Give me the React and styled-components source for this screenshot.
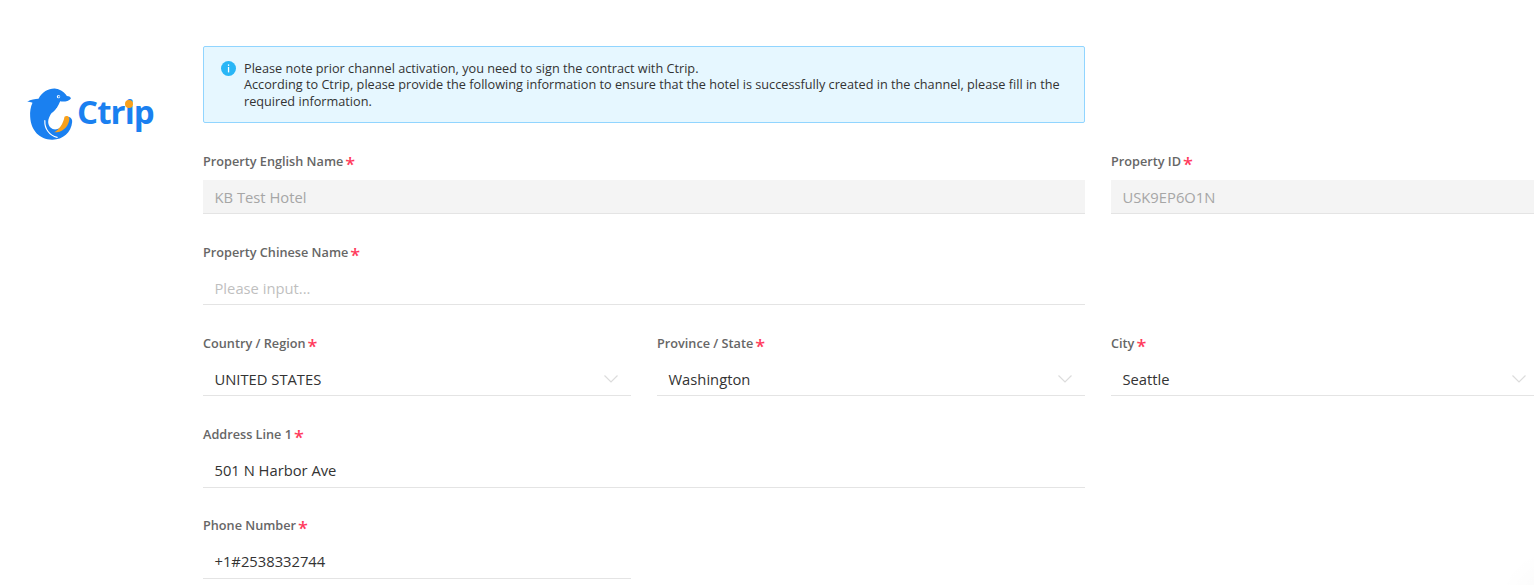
import styled, { createGlobalStyle } from 'styled-components';

const GlobalStyle = createGlobalStyle`
  html, body {
    margin: 0;
    height: 100%;
    overflow: hidden;
    background: #fff;
  }
  body {
    font-family: 'Open Sans', 'Liberation Sans', sans-serif;
  }
`;

const Page = styled.div`
  display: flex;
  width: 1534px;
  height: 585px;
  overflow: hidden;
  background: radial-gradient(circle at 1550px 600px, rgba(0, 0, 0, 0.025), rgba(0, 0, 0, 0) 50px);
`;

const LogoColumn = styled.div`
  flex: 0 0 203px;
  padding: 88px 0 0 27px;
  box-sizing: border-box;
`;

const LogoWrap = styled.div`
  position: relative;
  display: flex;
  align-items: flex-start;
`;

const LogoText = styled.span`
  font-weight: 700;
  font-size: 33px;
  line-height: 46px;
  letter-spacing: -0.9px;
  color: #1a80f0;
  margin: 1px 0 0 3px;
`;

const LogoDot = styled.i`
  position: absolute;
  left: 98px;
  top: 12px;
  width: 8px;
  height: 8px;
  border-radius: 50%;
  background: #f9a11b;
`;

const Content = styled.div`
  flex: 0 0 auto;
  padding-top: 46px;
`;

const Alert = styled.div`
  box-sizing: border-box;
  display: flex;
  gap: 8px;
  width: 882px;
  height: 77px;
  padding: 12.7px 16px 0 17px;
  background: #e6f7ff;
  border: 1px solid #91d5ff;
  border-radius: 2px;
  font-size: 12.7px;
  line-height: 16.5px;
  color: #333;
`;

const InfoIcon = styled.svg`
  flex: 0 0 15px;
  width: 15px;
  height: 15px;
  margin-top: 1.3px;
`;

const FormGrid = styled.div`
  display: grid;
  grid-template-columns: repeat(3, 428px);
  column-gap: 26px;
  grid-auto-rows: 91px;
  margin-top: 28px;
`;

const Field = styled.div`
  grid-column: ${(p) => p.$column || 'auto'};
`;

const Label = styled.div`
  height: 29px;
  font-size: 12.7px;
  line-height: 20px;
  font-weight: 600;
  color: #666;
`;

const Star = styled.span`
  display: inline-block;
  color: #ff3b5c;
  font-size: 18px;
  line-height: 0;
  margin-left: 2px;
  font-weight: 600;
  vertical-align: -5px;
`;

const Input = styled.div`
  box-sizing: border-box;
  display: flex;
  align-items: center;
  justify-content: space-between;
  height: ${(p) => (p.$tall ? '35px' : '34px')};
  padding: 0 11.5px ${(p) => (p.$tall ? '1px' : '0')};
  font-size: 14.75px;
  color: ${(p) => (p.$disabled ? '#a6a6a6' : p.$placeholder ? '#bfbfbf' : '#333')};
  background: ${(p) => (p.$disabled ? '#f4f4f4' : 'transparent')};
  border-bottom: 1px solid #e4e4e4;
`;

const Chevron = styled.svg`
  width: 14px;
  height: 8px;
  margin: 0 2px 0 0;
`;

const Required = ({ children }) => (
  <Label>
    {children}
    <Star>*</Star>
  </Label>
);

const Select = ({ children }) => (
  <Input>
    {children}
    <Chevron viewBox="0 0 14 8">
      <path d="M0.5 0.5 L7 7 L13.5 0.5" fill="none" stroke="#dcdcdc" strokeWidth="1.2" />
    </Chevron>
  </Input>
);

const App = () => (
  <Page>
    <GlobalStyle />
    <LogoColumn>
      <LogoWrap>
        <svg width="47" height="52" viewBox="84 84 140 156">
          <path
            d="M84 125 C95 118 108 116 118 116 C130 95 150 84 170 86 C185 88 198 98 203 108 C210 108 216 112 215 116 C208 124 195 126 183 124 C178 138 170 150 158 158 C152 166 147 176 147 186 C148 202 160 210 172 208 C186 206 198 192 200 175 L208 170 C216 172 220 178 219 186 C216 218 190 240 158 239 C122 238 95 212 93 170 C92 155 94 140 100 128 C94 126 90 125 84 125 Z"
            fill="#1a80f0"
          />
          <path d="M158 158 C153 146 152 135 154 126 L178 122 C175 138 170 150 158 158 Z" fill="#1a80f0" />
          <path d="M137 182 C136 205 150 227 174 232" fill="none" stroke="#fff" strokeWidth="3.5" strokeLinecap="round" />
          <path d="M196 170 C205 165 213 172 210 182 C205 205 185 218 165 217 C180 208 192 192 196 170 Z" fill="#f9a11b" />
          <circle cx="178" cy="110" r="5" fill="#fff" />
          <circle cx="179" cy="110" r="2.5" fill="#1a80f0" />
        </svg>
        <LogoText>Ctrip</LogoText>
        <LogoDot />
      </LogoWrap>
    </LogoColumn>
    <Content>
      <Alert>
        <InfoIcon viewBox="0 0 15 15">
          <circle cx="7.5" cy="7.5" r="7.5" fill="#29b6f6" />
          <rect x="6.9" y="3.4" width="1.3" height="1.5" fill="#fff" />
          <rect x="6.9" y="6" width="1.3" height="5.4" fill="#fff" />
        </InfoIcon>
        <div>
          Please note prior channel activation, you need to sign the contract with Ctrip.
          <br />
          According to Ctrip, please provide the following information to ensure that the hotel is successfully created in the channel, please fill in the required information.
        </div>
      </Alert>
      <FormGrid>
        <Field $column="span 2">
          <Required>Property English Name</Required>
          <Input $disabled>KB Test Hotel</Input>
        </Field>
        <Field>
          <Required>Property ID</Required>
          <Input $disabled>USK9EP6O1N</Input>
        </Field>
        <Field $column="1 / span 2">
          <Required>Property Chinese Name</Required>
          <Input $placeholder>Please input...</Input>
        </Field>
        <Field $column="1">
          <Required>Country / Region</Required>
          <Select>UNITED STATES</Select>
        </Field>
        <Field>
          <Required>Province / State</Required>
          <Select>Washington</Select>
        </Field>
        <Field>
          <Required>City</Required>
          <Select>Seattle</Select>
        </Field>
        <Field $column="1 / span 2">
          <Required>Address Line 1</Required>
          <Input $tall>501 N Harbor Ave</Input>
        </Field>
        <Field $column="1">
          <Required>Phone Number</Required>
          <Input $tall>+1#2538332744</Input>
        </Field>
      </FormGrid>
    </Content>
  </Page>
);

export default App;
